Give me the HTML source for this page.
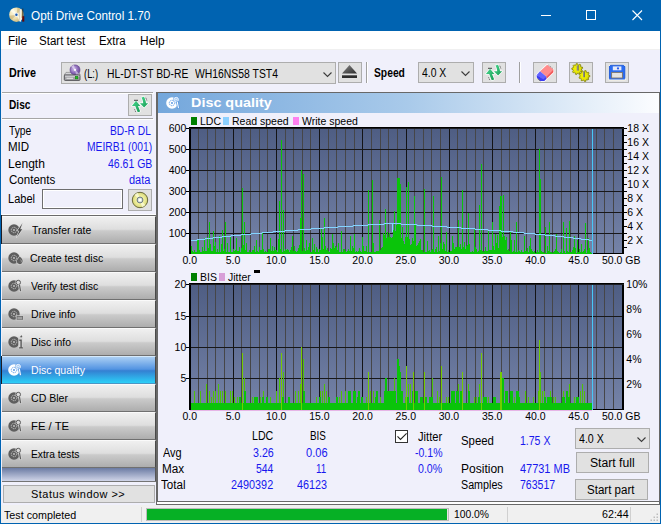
<!DOCTYPE html>
<html><head><meta charset="utf-8"><title>Opti Drive Control 1.70</title>
<style>
*{box-sizing:border-box;margin:0;padding:0}
html,body{width:661px;height:524px;overflow:hidden;background:#f0f0fb}
body{position:relative;font-family:"Liberation Sans",Arial,sans-serif;font-size:12px;color:#000;line-height:16px}
.a{position:absolute;white-space:nowrap}
.btn{position:absolute;background:#e1e1e1;border:1px solid #adadad}
.nav{position:absolute;left:2px;width:154px;height:28px;border-top:1px solid #fafafa;border-bottom:1px solid #707070;border-right:1px solid #4a4a4a;
 background:linear-gradient(#f0f0f0 0%,#dedede 47%,#cbcbcb 53%,#adadad 100%)}
.nav svg{position:absolute;left:5.4px;top:5px}
.nav.sel{background:linear-gradient(#abcff4 0%,#5394e2 47%,#3480d2 53%,#2cd0f8 100%);border-top-color:#d6eafb;border-bottom-color:#4a96c4}
.t{position:absolute;white-space:nowrap;line-height:16px;transform-origin:0 0}
</style></head><body>
<svg width="0" height="0" style="position:absolute"><defs>
 <radialGradient id="dg" cx="0.35" cy="0.35" r="0.8"><stop offset="0" stop-color="#fffbe2"/><stop offset="0.55" stop-color="#ecdca8"/><stop offset="1" stop-color="#b8a468"/></radialGradient>
 <linearGradient id="gg" x1="0" y1="0" x2="1" y2="1"><stop offset="0" stop-color="#4ad890"/><stop offset="1" stop-color="#169a52"/></linearGradient>
 <linearGradient id="ej" x1="0" y1="0" x2="1" y2="1"><stop offset="0" stop-color="#8a8a8a"/><stop offset="1" stop-color="#2a2a2a"/></linearGradient>
 <radialGradient id="pg" cx="0.4" cy="0.4" r="0.7"><stop offset="0" stop-color="#d0c0ec"/><stop offset="0.55" stop-color="#8c6ab8"/><stop offset="1" stop-color="#5c3e8c"/></radialGradient>
 <radialGradient id="yg" cx="0.4" cy="0.45" r="0.65"><stop offset="0" stop-color="#f6f600"/><stop offset="0.6" stop-color="#e2e208"/><stop offset="1" stop-color="#a4a400"/></radialGradient>
 <radialGradient id="cdg" cx="0.5" cy="0.5" r="0.5"><stop offset="0" stop-color="#f6f6c0"/><stop offset="0.6" stop-color="#ecec98"/><stop offset="1" stop-color="#d6d678"/></radialGradient>
 <g id="refresh">
  <path d="M5 4.800L0.900 9.900H4.200L6.700 16.300L9.200 15.400L7 9.900H9.400z" fill="url(#gg)" stroke="#fff" stroke-width="1.300" stroke-linejoin="round" paint-order="stroke"/>
  <path d="M10.400 1.500L13 0.800C14 3 14.800 5 15 7.200H17.200L13.100 11.600L8.900 7.200H12.200C12 5 11.400 3 10.400 1.500z" fill="url(#gg)" stroke="#fff" stroke-width="1.300" stroke-linejoin="round" paint-order="stroke"/>
  <path d="M3 4.300h4" stroke="#333" stroke-width="0.900"/><path d="M14.800 1.800l1 2.600M3.600 13.400l1 2.400" stroke="#333" stroke-width="0.800" stroke-dasharray="1 0.800"/>
 </g>
 <g id="ni"><circle cx="7" cy="8" r="5.700" fill="#5e5e5e"/><circle cx="7" cy="8" r="2.700" fill="none" stroke="#c6c6c6" stroke-width="0.900" stroke-dasharray="1.400 0.600"/><circle cx="7" cy="8" r="0.900" fill="#cacaca"/><circle cx="11.300" cy="4.500" r="2.900" fill="#d9d9d9"/><circle cx="11.300" cy="4.500" r="2.200" fill="#d9d9d9" stroke="#5e5e5e" stroke-width="1"/><path d="M12.300 6.500l1.300 7" stroke="#d9d9d9" stroke-width="2.600"/><path d="M12.400 6.600l1.200 6.600" stroke="#5e5e5e" stroke-width="1.200"/></g>
 <g id="ni1"><circle cx="7" cy="8" r="5.700" fill="#5e5e5e"/><circle cx="7" cy="8" r="2.700" fill="none" stroke="#c6c6c6" stroke-width="0.900" stroke-dasharray="1.400 0.600"/><circle cx="7" cy="8" r="0.900" fill="#cacaca"/><path d="M15.300 1.600L10.400 8.700h2L9.600 15.200L15.200 7.300h-2z" fill="#4a4a4a" stroke="#dcdcdc" stroke-width="1.300" paint-order="stroke" stroke-linejoin="round"/></g>
 <g id="ni2"><circle cx="7" cy="8" r="5.700" fill="#5e5e5e"/><circle cx="7" cy="8" r="2.700" fill="none" stroke="#c6c6c6" stroke-width="0.900" stroke-dasharray="1.400 0.600"/><circle cx="7" cy="8" r="0.900" fill="#cacaca"/><path d="M12.600 6.500C15.400 8.600 16.200 10.600 15.400 12.300A2.900 2.900 0 0 1 9.800 11.400C9.800 9.300 11.700 8.700 12.600 6.500z" fill="#5e5e5e" stroke="#d6d6d6" stroke-width="1.200" paint-order="stroke"/><path d="M13.400 9.500c1 1 1.200 2 0.700 2.800" stroke="#c0c0c0" stroke-width="0.700" fill="none"/></g>
 <g id="ni4"><circle cx="7" cy="8" r="5.700" fill="#5e5e5e"/><circle cx="7" cy="8" r="2.700" fill="none" stroke="#c6c6c6" stroke-width="0.900" stroke-dasharray="1.400 0.600"/><circle cx="7" cy="8" r="0.900" fill="#cacaca"/><rect x="8.800" y="9.300" width="7.600" height="5" fill="#d0d0d0"/><rect x="9.600" y="10" width="6.400" height="3.800" fill="#6a6a6a"/><path d="M10.400 11.300h4.800M10.400 12.700h4.800" stroke="#c8c8c8" stroke-width="0.700"/></g>
 <g id="ni5"><circle cx="7" cy="8" r="5.700" fill="#5e5e5e"/><circle cx="7" cy="8" r="2.700" fill="none" stroke="#c6c6c6" stroke-width="0.900" stroke-dasharray="1.400 0.600"/><circle cx="7" cy="8" r="0.900" fill="#cacaca"/><rect x="11.300" y="2.500" width="4.200" height="12.600" fill="#d6d6d6"/><path d="M13.600 3.200l1.300-1.500" stroke="#5a5a5a" stroke-width="1.300"/><path d="M12.300 6.300h1.800v7.400M11.900 13.900h4" stroke="#5a5a5a" stroke-width="1.400" fill="none"/></g>
 <g id="niw"><circle cx="7" cy="8" r="5.800" fill="#fff"/><circle cx="7" cy="8" r="2.700" fill="none" stroke="#5a98e4" stroke-width="0.900" stroke-dasharray="1.400 0.600"/><circle cx="7" cy="8" r="0.900" fill="#4a8ee0"/><circle cx="11.200" cy="4.600" r="3" fill="#5c9ae4"/><circle cx="11.200" cy="4.600" r="2.300" fill="#a8ccf4" stroke="#fff" stroke-width="0.800"/><path d="M10 4.800l0.800-1 0.800 1 0.800-1" stroke="#fff" stroke-width="0.600" fill="none"/><path d="M12.200 6.600l1.300 6.800" stroke="#4a90e0" stroke-width="2.400"/><path d="M12.300 6.800l1.200 6.400" stroke="#fff" stroke-width="1.100"/></g>
 <g id="dd"><path d="M0.500 0.500l4 4 4-4" fill="none" stroke="#3c3c3c" stroke-width="1.100"/></g>
</defs></svg>
<!-- window frame -->
<div class="a" style="left:0;top:0;width:661px;height:524px;background:#0063b1"></div>
<div class="a" style="left:1px;top:31px;width:659px;height:492px;background:#f0f0fb"></div>
<!-- title icon -->
<svg class="a" style="left:8px;top:6px" width="18" height="18" viewBox="0 0 18 18">
 <circle cx="8.400" cy="8.700" r="7.200" fill="url(#dg)"/>
 <path d="M8.400 8.700L2.200 5A7.200 7.200 0 0 1 5.200 2.200zM8.400 8.700L14.600 12.400A7.200 7.200 0 0 1 11.600 15.200z" fill="#fffdf0" opacity="0.750"/>
 <path d="M8.400 8.700L1.300 9.800A7.200 7.200 0 0 0 3.400 13.900zM8.400 8.700L9.500 1.600A7.200 7.200 0 0 1 13.400 3.500z" fill="#b8a060" opacity="0.450"/>
 <circle cx="8.400" cy="8.700" r="2.100" fill="#f2f2f6"/><circle cx="8.400" cy="8.700" r="1.200" fill="#1c5cb4"/>
 <path d="M14.800 2.500v8" stroke="#3a3020" stroke-width="0.900"/><rect x="14.200" y="10.200" width="2.100" height="5.400" fill="#640808"/>
 <path d="M12.700 3.200L12.300 15.600" stroke="#f4f2ec" stroke-width="1.600"/><path d="M11.700 3.600L11.400 14.600" stroke="#d4ccb8" stroke-width="0.700"/>
</svg>
<svg class="a" style="left:536px;top:5px" width="115" height="22" viewBox="0 0 115 22" fill="none" stroke="#fff" stroke-width="1">
 <path d="M5 10.500h10"/><rect x="50.500" y="5.500" width="9" height="9"/><path d="M96.500 5.500l9.500 9.500M106 5.500l-9.500 9.500" stroke-width="1.100"/>
</svg>
<!-- menu -->
<div class="a" style="left:1px;top:31px;width:659px;height:18px;background:#fff"></div>
<div class="a" style="left:1px;top:49px;width:659px;height:1px;background:#f0f0f0"></div>
<!-- toolbar -->
<div class="btn" style="left:61px;top:62px;width:275px;height:22px"></div>
<svg class="a" style="left:322.500px;top:71.500px" width="10" height="6"><use href="#dd"/></svg>
<svg class="a" style="left:63px;top:64px" width="20" height="18" viewBox="0 0 20 18">
 <path d="M3 8.400h13l1.200 2.600h-16z" fill="#d4d4d8" stroke="#777" stroke-width="0.600"/>
 <circle cx="12" cy="5.900" r="5" fill="url(#pg)" stroke="#5c4088" stroke-width="0.600"/><path d="M12 5.900L8 2.500A5 5 0 0 1 11 1z" fill="#e4d8f4" opacity="0.700"/><path d="M12 5.900L16 9.300A5 5 0 0 1 13 10.800z" fill="#e4d8f4" opacity="0.600"/><circle cx="12" cy="5.900" r="1.100" fill="#fff"/>
 <rect x="1.300" y="11" width="15.700" height="5.400" rx="0.800" fill="#a4a4a8" stroke="#4c4c50" stroke-width="0.900"/><rect x="2" y="11.600" width="14.300" height="1.400" fill="#c8c8cc"/>
 <rect x="3.500" y="13.800" width="6.500" height="1" fill="#e8e8e8"/><rect x="12.300" y="12.300" width="2.600" height="2.600" fill="#1ec81e" stroke="#0a700a" stroke-width="0.500"/>
</svg>
<div class="btn" style="left:338px;top:62px;width:24px;height:21px"></div>
<svg class="a" style="left:341px;top:64px" width="18" height="16" viewBox="0 0 18 16"><path d="M8.500 0.900L16 9.600H1z" fill="url(#ej)"/><rect x="1" y="11.200" width="15" height="2.800" fill="#2e2e2e"/><rect x="1" y="11.200" width="15" height="0.800" fill="#6a6a6a"/></svg>
<div class="a" style="left:366px;top:62px;width:1px;height:21px;background:#a0a0a0"></div><div class="a" style="left:367px;top:62px;width:1px;height:21px;background:#fff"></div>
<div class="btn" style="left:418px;top:62px;width:56px;height:21px"></div>
<svg class="a" style="left:460.500px;top:70.500px" width="10" height="6"><use href="#dd"/></svg>
<div class="btn" style="left:482px;top:62px;width:24px;height:21px"></div>
<svg class="a" style="left:485px;top:63.500px" width="18" height="18" viewBox="0 0 18 18"><use href="#refresh"/></svg>
<div class="a" style="left:519px;top:62px;width:1px;height:21px;background:#a0a0a0"></div><div class="a" style="left:520px;top:62px;width:1px;height:21px;background:#fff"></div>
<div class="btn" style="left:533px;top:62px;width:24px;height:21px"></div>
<svg class="a" style="left:533px;top:62px" width="24" height="21" viewBox="0 0 24 21">
 <path d="M7 9.200L14.200 2.800L20.400 7.300V10.300L13.400 17L11.300 19H7.300L3.700 15.500V13z" fill="#fff" stroke="#fff" stroke-width="1.400" stroke-linejoin="round"/>
 <path d="M7 9.200L14.200 2.800L20.400 7.300L13.200 14.500z" fill="#ff8c8c"/><path d="M13.200 14.500L20.400 7.300V10.300L13.400 17z" fill="#f25a5a"/>
 <path d="M3.700 13L7 9.200L13.200 14.500L10.500 18z" fill="#6464ff"/><path d="M3.700 13L10.500 18L13.400 17L13.200 14.500L10.300 17.200z M3.700 13V15.500L7.300 19H11.300L13.400 17L10.500 18z" fill="#3c3cf0"/>
 <path d="M15.500 3.200l4.500 3.400" stroke="#555" stroke-width="0.700" stroke-dasharray="1.200 0.800"/><path d="M4.300 16.500l3 2.700" stroke="#555" stroke-width="0.700"/>
</svg>
<div class="btn" style="left:569px;top:62px;width:24px;height:21px"></div>
<svg class="a" style="left:569px;top:62px" width="24" height="21" viewBox="0 0 24 21">
 <path d="M12.5 8.0L13.5 8.8L13.0 10.0L11.7 9.7L11.0 10.5L11.3 11.7L10.0 12.3L9.2 11.3L8.2 11.4L7.6 12.6L6.3 12.2L6.3 10.9L5.5 10.3L4.2 10.8L3.5 9.7L4.3 8.7L4.0 7.7L2.8 7.3L2.9 6.0L4.2 5.8L4.6 4.9L3.9 3.8L4.9 2.8L6.0 3.5L6.9 3.0L7.1 1.7L8.4 1.6L8.9 2.8L9.9 3.1L10.8 2.2L11.9 3.0L11.5 4.2L12.1 5.0L13.4 5.0L13.7 6.3L12.6 6.9z" fill="url(#yg)" stroke="#7a7a00" stroke-width="0.700"/>
 <rect x="7.700" y="3.400" width="1.700" height="5.200" fill="#90908c"/><rect x="8.900" y="3.400" width="0.600" height="5.200" fill="#5c5c50"/>
 <path d="M19.2 16.1L19.9 17.1L19.0 18.1L17.9 17.5L17.0 18.0L16.9 19.3L15.5 19.5L15.1 18.3L14.0 18.1L13.1 19.0L12.0 18.3L12.4 17.1L11.7 16.2L10.4 16.4L10.0 15.1L11.1 14.4L11.1 13.4L10.1 12.6L10.6 11.4L11.9 11.6L12.6 10.8L12.2 9.5L13.4 8.9L14.3 9.9L15.3 9.7L15.8 8.5L17.2 8.8L17.2 10.1L18.1 10.6L19.3 10.1L20.1 11.1L19.3 12.2L19.6 13.2L20.9 13.5L20.8 14.8L19.6 15.1z" fill="url(#yg)" stroke="#7a7a00" stroke-width="0.700"/>
 <rect x="14" y="9.800" width="1.700" height="5.400" fill="#90908c"/><rect x="15.200" y="9.800" width="0.600" height="5.400" fill="#5c5c50"/>
</svg>
<div class="btn" style="left:605px;top:62px;width:24px;height:21px"></div>
<svg class="a" style="left:605px;top:62px" width="24" height="21" viewBox="0 0 24 21">
 <path d="M5.200 2.800h13.800l1.400 1.600v13.600h-16.700v-13.600z" fill="#2a6cf2" stroke="#fdf8e8" stroke-width="1"/>
 <path d="M4.400 16.500v-12l1.300-1.200h12.800l1.400 1.500v11.700" fill="none" stroke="#1c54d0" stroke-width="0.800"/>
 <rect x="7.800" y="4.400" width="8.600" height="3.900" fill="#e6ebf8"/><circle cx="13" cy="6.400" r="1.100" fill="#2a5cf0"/>
 <rect x="6.600" y="10.400" width="10.800" height="5.600" fill="#e2e2e2" stroke="#7c7468" stroke-width="0.900"/>
</svg>
<!-- left disc panel -->
<div class="a" style="left:2px;top:92px;width:151px;height:1px;background:#a6a6a6"></div>
<div class="a" style="left:2px;top:118px;width:151px;height:1px;background:#a6a6a6"></div>
<div class="a" style="left:2px;top:119px;width:152px;height:1px;background:#fff"></div><div class="a" style="left:2px;top:93px;width:152px;height:1px;background:#fff"></div>
<div class="btn" style="left:128px;top:94px;width:24px;height:22px"></div>
<svg class="a" style="left:131px;top:96px" width="18" height="18" viewBox="0 0 18 18"><use href="#refresh"/></svg>
<div class="a" style="left:42px;top:189px;width:81px;height:20px;background:#f0f0fb;border:1px solid #6e6e6e;box-shadow:inset 0 0 0 1px #fff"></div>
<div class="btn" style="left:128px;top:189px;width:24px;height:22px"></div>
<svg class="a" style="left:131px;top:191px" width="18" height="18" viewBox="0 0 18 18">
 <circle cx="9" cy="9" r="7.700" fill="url(#cdg)" stroke="#5c5c30" stroke-width="0.900"/>
 <path d="M9 9L3.500 4A7.500 7.500 0 0 1 7 1.800zM9 9L14.500 14A7.500 7.500 0 0 1 11 16.200z" fill="#fbfbd8" opacity="0.800"/>
 <circle cx="9" cy="9" r="2.900" fill="#dfe6d8" stroke="#5a6a78" stroke-width="0.900"/><circle cx="9" cy="9" r="1.300" fill="#fff"/>
</svg>
<!-- nav -->
<div class="a" style="left:2px;top:214px;width:154px;height:1px;background:#fff"></div><div class="a" style="left:2px;top:215px;width:154px;height:1px;background:#6a6a6a"></div>
<div class="a" style="left:1px;top:215px;width:1px;height:29px;background:#1c1c24"></div><div class="a" style="left:1px;top:356px;width:1px;height:28px;background:#1c1c24"></div>
<div class="nav" style="top:216px"><svg width="18" height="18"><use href="#ni1"/></svg></div>
<div class="nav" style="top:244px"><svg width="18" height="18"><use href="#ni2"/></svg></div>
<div class="nav" style="top:272px"><svg width="18" height="18"><use href="#ni"/></svg></div>
<div class="nav" style="top:300px"><svg width="18" height="18"><use href="#ni4"/></svg></div>
<div class="nav" style="top:328px"><svg width="18" height="18"><use href="#ni5"/></svg></div>
<div class="nav sel" style="top:356px"><svg width="18" height="18"><use href="#niw"/></svg></div>
<div class="nav" style="top:384px"><svg width="18" height="18"><use href="#ni"/></svg></div>
<div class="nav" style="top:412px"><svg width="18" height="18"><use href="#ni"/></svg></div>
<div class="nav" style="top:440px"><svg width="18" height="18"><use href="#ni"/></svg></div>
<div class="a" style="left:2px;top:468px;width:154px;height:13px;background:linear-gradient(#6b7ba3,#d0d5e8);border-right:1px solid #555"></div><div class="a" style="left:2px;top:481px;width:154px;height:1px;background:#747474"></div>
<div class="btn" style="left:3px;top:485px;width:152px;height:18px"></div>
<!-- chart panel -->
<div class="a" style="left:156px;top:92px;width:504px;height:413px;border:1px solid #686868;background:#fff"></div>
<div class="a" style="left:157px;top:92px;width:502px;height:410px;border:1px solid #686868;border-right:none;background:#f0f0fb"></div>
<div class="a" style="left:158px;top:93px;width:501px;height:20px;background:linear-gradient(90deg,#74a7dc 0%,#a9caea 50%,#fcfdff 100%)"></div>
<svg class="a" style="left:165px;top:95.300px" width="18" height="18"><use href="#niw"/></svg>
<svg width="661" height="524" viewBox="0 0 661 524" style="position:absolute;left:0;top:0" font-family="Liberation Sans, Arial, sans-serif" font-size="11px" fill="#000">
<defs><linearGradient id="g1" x1="0" y1="0" x2="0" y2="1"><stop offset="0" stop-color="#4e5d83"/><stop offset="1" stop-color="#7583a8"/></linearGradient></defs>
<rect x="189" y="127" width="435" height="127" fill="url(#g1)"/>
<rect x="198" y="128" width="1" height="126" fill="#464648"/>
<rect x="207" y="128" width="1" height="126" fill="#464648"/>
<rect x="215" y="128" width="1" height="126" fill="#464648"/>
<rect x="224" y="128" width="1" height="126" fill="#464648"/>
<rect x="233" y="128" width="1" height="126" fill="#141416"/>
<rect x="241" y="128" width="1" height="126" fill="#464648"/>
<rect x="250" y="128" width="1" height="126" fill="#464648"/>
<rect x="259" y="128" width="1" height="126" fill="#464648"/>
<rect x="267" y="128" width="1" height="126" fill="#464648"/>
<rect x="276" y="128" width="1" height="126" fill="#141416"/>
<rect x="285" y="128" width="1" height="126" fill="#464648"/>
<rect x="293" y="128" width="1" height="126" fill="#464648"/>
<rect x="302" y="128" width="1" height="126" fill="#464648"/>
<rect x="310" y="128" width="1" height="126" fill="#464648"/>
<rect x="319" y="128" width="1" height="126" fill="#141416"/>
<rect x="328" y="128" width="1" height="126" fill="#464648"/>
<rect x="336" y="128" width="1" height="126" fill="#464648"/>
<rect x="345" y="128" width="1" height="126" fill="#464648"/>
<rect x="354" y="128" width="1" height="126" fill="#464648"/>
<rect x="362" y="128" width="1" height="126" fill="#141416"/>
<rect x="371" y="128" width="1" height="126" fill="#464648"/>
<rect x="380" y="128" width="1" height="126" fill="#464648"/>
<rect x="388" y="128" width="1" height="126" fill="#464648"/>
<rect x="397" y="128" width="1" height="126" fill="#464648"/>
<rect x="406" y="128" width="1" height="126" fill="#141416"/>
<rect x="414" y="128" width="1" height="126" fill="#464648"/>
<rect x="423" y="128" width="1" height="126" fill="#464648"/>
<rect x="431" y="128" width="1" height="126" fill="#464648"/>
<rect x="440" y="128" width="1" height="126" fill="#464648"/>
<rect x="449" y="128" width="1" height="126" fill="#141416"/>
<rect x="457" y="128" width="1" height="126" fill="#464648"/>
<rect x="466" y="128" width="1" height="126" fill="#464648"/>
<rect x="475" y="128" width="1" height="126" fill="#464648"/>
<rect x="483" y="128" width="1" height="126" fill="#464648"/>
<rect x="492" y="128" width="1" height="126" fill="#141416"/>
<rect x="501" y="128" width="1" height="126" fill="#464648"/>
<rect x="509" y="128" width="1" height="126" fill="#464648"/>
<rect x="518" y="128" width="1" height="126" fill="#464648"/>
<rect x="526" y="128" width="1" height="126" fill="#464648"/>
<rect x="535" y="128" width="1" height="126" fill="#141416"/>
<rect x="544" y="128" width="1" height="126" fill="#464648"/>
<rect x="552" y="128" width="1" height="126" fill="#464648"/>
<rect x="561" y="128" width="1" height="126" fill="#464648"/>
<rect x="570" y="128" width="1" height="126" fill="#464648"/>
<rect x="578" y="128" width="1" height="126" fill="#141416"/>
<rect x="587" y="128" width="1" height="126" fill="#464648"/>
<rect x="596" y="128" width="1" height="126" fill="#464648"/>
<rect x="604" y="128" width="1" height="126" fill="#464648"/>
<rect x="613" y="128" width="1" height="126" fill="#464648"/>
<rect x="189" y="149" width="435" height="1" fill="#18181a"/>
<rect x="189" y="170" width="435" height="1" fill="#18181a"/>
<rect x="189" y="191" width="435" height="1" fill="#18181a"/>
<rect x="189" y="212" width="435" height="1" fill="#18181a"/>
<rect x="189" y="233" width="435" height="1" fill="#18181a"/>
<rect x="189" y="253" width="435" height="1" fill="#000"/>
<path d="M190 254v-3h1v3zM191 254v-8h1v8zM192 254v-3h1v3zM193 254v-2h1v2zM194 254v-4h1v4zM195 254v-2h1v2zM196 254v-2h1v2zM197 254v-14h1v14zM198 254v-14h1v14zM199 254v-4h1v4zM200 254v-2h1v2zM201 254v-2h1v2zM202 254v-7h1v7zM203 254v-3h1v3zM204 254v-16h1v16zM205 254v-3h1v3zM206 254v-3h1v3zM207 254v-17h1v17zM208 254v-6h1v6zM209 254v-32h1v32zM210 254v-10h1v10zM211 254v-3h1v3zM212 254v-3h1v3zM213 254v-23h1v23zM214 254v-8h1v8zM215 254v-12h1v12zM216 254v-2h1v2zM217 254v-5h1v5zM218 254v-2h1v2zM219 254v-18h1v18zM220 254v-2h1v2zM221 254v-10h1v10zM222 254v-24h1v24zM223 254v-3h1v3zM224 254v-5h1v5zM225 254v-32h1v32zM226 254v-2h1v2zM227 254v-11h1v11zM228 254v-2h1v2zM229 254v-2h1v2zM230 254v-18h1v18zM231 254v-2h1v2zM232 254v-2h1v2zM233 254v-5h1v5zM234 254v-3h1v3zM235 254v-4h1v4zM236 254v-16h1v16zM237 254v-3h1v3zM238 254v-3h1v3zM239 254v-7h1v7zM240 254v-2h1v2zM241 254v-6h1v6zM242 254v-66h1v66zM243 254v-9h1v9zM244 254v-32h1v32zM245 254v-4h1v4zM246 254v-11h1v11zM247 254v-2h1v2zM248 254v-2h1v2zM249 254v-4h1v4zM250 254v-2h1v2zM251 254v-2h1v2zM252 254v-4h1v4zM253 254v-4h1v4zM254 254v-8h1v8zM255 254v-2h1v2zM256 254v-14h1v14zM257 254v-3h1v3zM258 254v-2h1v2zM259 254v-7h1v7zM260 254v-4h1v4zM261 254v-4h1v4zM262 254v-21h1v21zM263 254v-5h1v5zM264 254v-2h1v2zM265 254v-3h1v3zM266 254v-2h1v2zM267 254v-2h1v2zM268 254v-5h1v5zM269 254v-5h1v5zM270 254v-16h1v16zM271 254v-3h1v3zM272 254v-8h1v8zM273 254v-3h1v3zM274 254v-7h1v7zM275 254v-4h1v4zM276 254v-4h1v4zM277 254v-2h1v2zM278 254v-15h1v15zM279 254v-53h1v53zM280 254v-5h1v5zM281 254v-114h1v114zM282 254v-2h1v2zM283 254v-44h1v44zM284 254v-3h1v3zM285 254v-5h1v5zM286 254v-4h1v4zM287 254v-5h1v5zM288 254v-4h1v4zM289 254v-2h1v2zM290 254v-4h1v4zM291 254v-7h1v7zM292 254v-18h1v18zM293 254v-3h1v3zM294 254v-8h1v8zM295 254v-3h1v3zM296 254v-2h1v2zM297 254v-3h1v3zM298 254v-6h1v6zM299 254v-9h1v9zM300 254v-36h1v36zM301 254v-84h1v84zM302 254v-3h1v3zM303 254v-80h1v80zM304 254v-6h1v6zM305 254v-3h1v3zM306 254v-14h1v14zM307 254v-4h1v4zM308 254v-7h1v7zM309 254v-11h1v11zM310 254v-2h1v2zM311 254v-2h1v2zM312 254v-16h1v16zM313 254v-4h1v4zM314 254v-10h1v10zM315 254v-2h1v2zM316 254v-7h1v7zM317 254v-5h1v5zM318 254v-2h1v2zM319 254v-5h1v5zM320 254v-4h1v4zM321 254v-25h1v25zM322 254v-17h1v17zM323 254v-5h1v5zM324 254v-36h1v36zM325 254v-8h1v8zM326 254v-4h1v4zM327 254v-6h1v6zM328 254v-3h1v3zM329 254v-2h1v2zM330 254v-6h1v6zM331 254v-5h1v5zM332 254v-20h1v20zM333 254v-11h1v11zM334 254v-6h1v6zM335 254v-8h1v8zM336 254v-7h1v7zM337 254v-4h1v4zM338 254v-11h1v11zM339 254v-2h1v2zM340 254v-2h1v2zM341 254v-23h1v23zM342 254v-2h1v2zM343 254v-5h1v5zM344 254v-5h1v5zM345 254v-3h1v3zM346 254v-2h1v2zM347 254v-3h1v3zM348 254v-5h1v5zM349 254v-3h1v3zM350 254v-18h1v18zM351 254v-3h1v3zM352 254v-8h1v8zM353 254v-6h1v6zM354 254v-20h1v20zM355 254v-2h1v2zM356 254v-3h1v3zM357 254v-2h1v2zM358 254v-3h1v3zM359 254v-6h1v6zM360 254v-3h1v3zM361 254v-2h1v2zM362 254v-17h1v17zM363 254v-8h1v8zM364 254v-3h1v3zM365 254v-3h1v3zM366 254v-8h1v8zM367 254v-2h1v2zM368 254v-64h1v64zM369 254v-2h1v2zM370 254v-2h1v2zM371 254v-2h1v2zM372 254v-74h1v74zM373 254v-11h1v11zM374 254v-2h1v2zM375 254v-2h1v2zM376 254v-3h1v3zM377 254v-3h1v3zM378 254v-3h1v3zM379 254v-34h1v34zM380 254v-4h1v4zM381 254v-6h1v6zM382 254v-7h1v7zM383 254v-21h1v21zM384 254v-19h1v19zM385 254v-45h1v45zM386 254v-16h1v16zM387 254v-22h1v22zM388 254v-17h1v17zM389 254v-21h1v21zM390 254v-17h1v17zM391 254v-16h1v16zM392 254v-17h1v17zM393 254v-24h1v24zM394 254v-43h1v43zM395 254v-23h1v23zM396 254v-29h1v29zM397 254v-76h1v76zM398 254v-76h1v76zM399 254v-76h1v76zM400 254v-70h1v70zM401 254v-16h1v16zM402 254v-27h1v27zM403 254v-13h1v13zM404 254v-10h1v10zM405 254v-17h1v17zM406 254v-67h1v67zM407 254v-17h1v17zM408 254v-72h1v72zM409 254v-15h1v15zM410 254v-9h1v9zM411 254v-10h1v10zM412 254v-16h1v16zM413 254v-13h1v13zM414 254v-58h1v58zM415 254v-30h1v30zM416 254v-8h1v8zM417 254v-9h1v9zM418 254v-11h1v11zM419 254v-13h1v13zM420 254v-15h1v15zM421 254v-4h1v4zM422 254v-4h1v4zM423 254v-2h1v2zM424 254v-65h1v65zM425 254v-2h1v2zM426 254v-2h1v2zM427 254v-13h1v13zM428 254v-3h1v3zM429 254v-4h1v4zM430 254v-2h1v2zM431 254v-4h1v4zM432 254v-5h1v5zM433 254v-58h1v58zM434 254v-2h1v2zM435 254v-5h1v5zM436 254v-7h1v7zM437 254v-2h1v2zM438 254v-18h1v18zM439 254v-3h1v3zM440 254v-11h1v11zM441 254v-77h1v77zM442 254v-5h1v5zM443 254v-12h1v12zM444 254v-10h1v10zM445 254v-3h1v3zM446 254v-22h1v22zM447 254v-2h1v2zM448 254v-4h1v4zM449 254v-2h1v2zM450 254v-3h1v3zM451 254v-3h1v3zM452 254v-18h1v18zM453 254v-11h1v11zM454 254v-5h1v5zM455 254v-7h1v7zM456 254v-7h1v7zM457 254v-7h1v7zM458 254v-34h1v34zM459 254v-7h1v7zM460 254v-10h1v10zM461 254v-5h1v5zM462 254v-64h1v64zM463 254v-7h1v7zM464 254v-12h1v12zM465 254v-5h1v5zM466 254v-8h1v8zM467 254v-9h1v9zM468 254v-41h1v41zM469 254v-10h1v10zM470 254v-2h1v2zM471 254v-2h1v2zM472 254v-3h1v3zM473 254v-2h1v2zM474 254v-26h1v26zM475 254v-7h1v7zM476 254v-5h1v5zM477 254v-2h1v2zM478 254v-3h1v3zM479 254v-49h1v49zM480 254v-4h1v4zM481 254v-90h1v90zM482 254v-3h1v3zM483 254v-2h1v2zM484 254v-3h1v3zM485 254v-7h1v7zM486 254v-3h1v3zM487 254v-3h1v3zM488 254v-24h1v24zM489 254v-4h1v4zM490 254v-4h1v4zM491 254v-4h1v4zM492 254v-32h1v32zM493 254v-8h1v8zM494 254v-4h1v4zM495 254v-20h1v20zM496 254v-11h1v11zM497 254v-19h1v19zM498 254v-6h1v6zM499 254v-48h1v48zM500 254v-58h1v58zM501 254v-58h1v58zM502 254v-17h1v17zM503 254v-59h1v59zM504 254v-18h1v18zM505 254v-14h1v14zM506 254v-17h1v17zM507 254v-4h1v4zM508 254v-5h1v5zM509 254v-3h1v3zM510 254v-22h1v22zM511 254v-14h1v14zM512 254v-2h1v2zM513 254v-3h1v3zM514 254v-14h1v14zM515 254v-2h1v2zM516 254v-32h1v32zM517 254v-2h1v2zM518 254v-4h1v4zM519 254v-3h1v3zM520 254v-2h1v2zM521 254v-4h1v4zM522 254v-2h1v2zM523 254v-2h1v2zM524 254v-18h1v18zM525 254v-3h1v3zM526 254v-3h1v3zM527 254v-6h1v6zM528 254v-2h1v2zM529 254v-8h1v8zM530 254v-16h1v16zM531 254v-5h1v5zM532 254v-3h1v3zM533 254v-2h1v2zM534 254v-3h1v3zM535 254v-1h1v1zM536 254v-2h1v2zM537 254v-4h1v4zM538 254v-2h1v2zM539 254v-105h1v105zM540 254v-75h1v75zM541 254v-3h1v3zM542 254v-2h1v2zM543 254v-2h1v2zM544 254v-1h1v1zM545 254v-27h1v27zM546 254v-1h1v1zM547 254v-8h1v8zM548 254v-3h1v3zM549 254v-32h1v32zM550 254v-2h1v2zM551 254v-2h1v2zM552 254v-1h1v1zM553 254v-2h1v2zM554 254v-3h1v3zM555 254v-5h1v5zM556 254v-20h1v20zM557 254v-3h1v3zM558 254v-2h1v2zM559 254v-1h1v1zM560 254v-2h1v2zM561 254v-5h1v5zM562 254v-1h1v1zM563 254v-32h1v32zM564 254v-3h1v3zM565 254v-1h1v1zM566 254v-26h1v26zM567 254v-3h1v3zM568 254v-2h1v2zM569 254v-33h1v33zM570 254v-2h1v2zM571 254v-2h1v2zM572 254v-4h1v4zM573 254v-7h1v7zM574 254v-18h1v18zM575 254v-6h1v6zM576 254v-1h1v1zM577 254v-14h1v14zM578 254v-2h1v2zM579 254v-5h1v5zM580 254v-2h1v2zM581 254v-10h1v10zM582 254v-2h1v2zM583 254v-3h1v3zM584 254v-5h1v5zM585 254v-31h1v31zM586 254v-1h1v1zM587 254v-4h1v4zM588 254v-16h1v16zM589 254v-6h1v6zM590 254v-2h1v2zM591 254v-1h1v1z" fill="#0ac40a" shape-rendering="crispEdges"/>
<polyline points="190,240.5 197,240.5 197,239.5 205,239.5 205,238.5 213,238.5 213,237.5 222,237.5 222,236.5 231,236.5 231,235.5 241,235.5 241,234.5 251,234.5 251,233.5 262,233.5 262,232.5 273,232.5 273,231.5 285,231.5 285,230.5 298,230.5 298,229.5 311,229.5 311,228.5 324,228.5 324,227.5 338,227.5 338,226.5 353,226.5 353,225.5 368,225.5 368,224.5 384,224.5 384,223.5 401,223.5 401,224.5 417,224.5 417,225.5 432,225.5 432,226.5 447,226.5 447,227.5 461,227.5 461,228.5 475,228.5 475,229.5 488,229.5 488,230.5 501,230.5 501,231.5 513,231.5 513,232.5 524,232.5 524,233.5 535,233.5 535,234.5 545,234.5 545,235.5 555,235.5 555,236.5 564,236.5 564,237.5 573,237.5 573,238.5 581,238.5 581,239.5 589,239.5 589,240.5 592,240.5" fill="none" stroke="#84d4ff" stroke-width="1"/><path d="M392.5 223v9" stroke="#84d4ff" stroke-width="1" fill="none"/>
<rect x="592" y="128" width="1" height="126" fill="#48c8f6"/>
<rect x="189" y="127" width="2" height="127" fill="#000"/>
<rect x="622" y="127" width="2" height="127" fill="#000"/>
<rect x="189" y="127" width="435" height="1" fill="#000"/>
<rect x="189" y="128" width="435" height="1" fill="#1c1c22"/>
<rect x="189" y="283" width="435" height="127" fill="url(#g1)"/>
<rect x="198" y="284" width="1" height="126" fill="#464648"/>
<rect x="207" y="284" width="1" height="126" fill="#464648"/>
<rect x="215" y="284" width="1" height="126" fill="#464648"/>
<rect x="224" y="284" width="1" height="126" fill="#464648"/>
<rect x="233" y="284" width="1" height="126" fill="#141416"/>
<rect x="241" y="284" width="1" height="126" fill="#464648"/>
<rect x="250" y="284" width="1" height="126" fill="#464648"/>
<rect x="259" y="284" width="1" height="126" fill="#464648"/>
<rect x="267" y="284" width="1" height="126" fill="#464648"/>
<rect x="276" y="284" width="1" height="126" fill="#141416"/>
<rect x="285" y="284" width="1" height="126" fill="#464648"/>
<rect x="293" y="284" width="1" height="126" fill="#464648"/>
<rect x="302" y="284" width="1" height="126" fill="#464648"/>
<rect x="310" y="284" width="1" height="126" fill="#464648"/>
<rect x="319" y="284" width="1" height="126" fill="#141416"/>
<rect x="328" y="284" width="1" height="126" fill="#464648"/>
<rect x="336" y="284" width="1" height="126" fill="#464648"/>
<rect x="345" y="284" width="1" height="126" fill="#464648"/>
<rect x="354" y="284" width="1" height="126" fill="#464648"/>
<rect x="362" y="284" width="1" height="126" fill="#141416"/>
<rect x="371" y="284" width="1" height="126" fill="#464648"/>
<rect x="380" y="284" width="1" height="126" fill="#464648"/>
<rect x="388" y="284" width="1" height="126" fill="#464648"/>
<rect x="397" y="284" width="1" height="126" fill="#464648"/>
<rect x="406" y="284" width="1" height="126" fill="#141416"/>
<rect x="414" y="284" width="1" height="126" fill="#464648"/>
<rect x="423" y="284" width="1" height="126" fill="#464648"/>
<rect x="431" y="284" width="1" height="126" fill="#464648"/>
<rect x="440" y="284" width="1" height="126" fill="#464648"/>
<rect x="449" y="284" width="1" height="126" fill="#141416"/>
<rect x="457" y="284" width="1" height="126" fill="#464648"/>
<rect x="466" y="284" width="1" height="126" fill="#464648"/>
<rect x="475" y="284" width="1" height="126" fill="#464648"/>
<rect x="483" y="284" width="1" height="126" fill="#464648"/>
<rect x="492" y="284" width="1" height="126" fill="#141416"/>
<rect x="501" y="284" width="1" height="126" fill="#464648"/>
<rect x="509" y="284" width="1" height="126" fill="#464648"/>
<rect x="518" y="284" width="1" height="126" fill="#464648"/>
<rect x="526" y="284" width="1" height="126" fill="#464648"/>
<rect x="535" y="284" width="1" height="126" fill="#141416"/>
<rect x="544" y="284" width="1" height="126" fill="#464648"/>
<rect x="552" y="284" width="1" height="126" fill="#464648"/>
<rect x="561" y="284" width="1" height="126" fill="#464648"/>
<rect x="570" y="284" width="1" height="126" fill="#464648"/>
<rect x="578" y="284" width="1" height="126" fill="#141416"/>
<rect x="587" y="284" width="1" height="126" fill="#464648"/>
<rect x="596" y="284" width="1" height="126" fill="#464648"/>
<rect x="604" y="284" width="1" height="126" fill="#464648"/>
<rect x="613" y="284" width="1" height="126" fill="#464648"/>
<rect x="189" y="316" width="435" height="1" fill="#18181a"/>
<rect x="189" y="347" width="435" height="1" fill="#18181a"/>
<rect x="189" y="378" width="435" height="1" fill="#18181a"/>
<rect x="189" y="409" width="435" height="1" fill="#000"/>
<path d="M190 410v-7h1v7zM191 410v-7h1v7zM192 410v-7h1v7zM193 410v-7h1v7zM194 410v-7h1v7zM195 410v-7h1v7zM196 410v-7h1v7zM197 410v-7h1v7zM198 410v-7h1v7zM199 410v-7h1v7zM200 410v-7h1v7zM201 410v-7h1v7zM202 410v-7h1v7zM203 410v-7h1v7zM204 410v-7h1v7zM205 410v-7h1v7zM206 410v-7h1v7zM207 410v-7h1v7zM208 410v-7h1v7zM209 410v-7h1v7zM210 410v-7h1v7zM211 410v-7h1v7zM212 410v-7h1v7zM213 410v-7h1v7zM214 410v-7h1v7zM215 410v-7h1v7zM216 410v-7h1v7zM217 410v-7h1v7zM218 410v-7h1v7zM219 410v-7h1v7zM220 410v-7h1v7zM221 410v-7h1v7zM222 410v-7h1v7zM223 410v-7h1v7zM224 410v-7h1v7zM225 410v-7h1v7zM226 410v-7h1v7zM227 410v-7h1v7zM228 410v-7h1v7zM229 410v-7h1v7zM230 410v-7h1v7zM231 410v-7h1v7zM232 410v-7h1v7zM233 410v-7h1v7zM234 410v-7h1v7zM235 410v-7h1v7zM236 410v-7h1v7zM237 410v-7h1v7zM238 410v-7h1v7zM239 410v-13h1v13zM240 410v-13h1v13zM241 410v-7h1v7zM242 410v-7h1v7zM243 410v-7h1v7zM244 410v-19h1v19zM245 410v-19h1v19zM246 410v-7h1v7zM247 410v-7h1v7zM248 410v-7h1v7zM249 410v-7h1v7zM250 410v-7h1v7zM251 410v-7h1v7zM252 410v-7h1v7zM253 410v-7h1v7zM254 410v-13h1v13zM255 410v-13h1v13zM256 410v-13h1v13zM257 410v-13h1v13zM258 410v-7h1v7zM259 410v-7h1v7zM260 410v-7h1v7zM261 410v-7h1v7zM262 410v-13h1v13zM263 410v-13h1v13zM264 410v-7h1v7zM265 410v-7h1v7zM266 410v-13h1v13zM267 410v-13h1v13zM268 410v-7h1v7zM269 410v-7h1v7zM270 410v-7h1v7zM271 410v-7h1v7zM272 410v-7h1v7zM273 410v-7h1v7zM274 410v-7h1v7zM275 410v-7h1v7zM276 410v-7h1v7zM277 410v-7h1v7zM278 410v-7h1v7zM279 410v-7h1v7zM280 410v-7h1v7zM281 410v-7h1v7zM282 410v-13h1v13zM283 410v-13h1v13zM284 410v-7h1v7zM285 410v-7h1v7zM286 410v-7h1v7zM287 410v-7h1v7zM288 410v-13h1v13zM289 410v-13h1v13zM290 410v-7h1v7zM291 410v-7h1v7zM292 410v-7h1v7zM293 410v-7h1v7zM294 410v-7h1v7zM295 410v-7h1v7zM296 410v-7h1v7zM297 410v-7h1v7zM298 410v-7h1v7zM299 410v-7h1v7zM300 410v-7h1v7zM301 410v-7h1v7zM302 410v-7h1v7zM303 410v-19h1v19zM304 410v-19h1v19zM305 410v-7h1v7zM306 410v-7h1v7zM307 410v-7h1v7zM308 410v-7h1v7zM309 410v-7h1v7zM310 410v-7h1v7zM311 410v-7h1v7zM312 410v-7h1v7zM313 410v-7h1v7zM314 410v-7h1v7zM315 410v-7h1v7zM316 410v-7h1v7zM317 410v-7h1v7zM318 410v-7h1v7zM319 410v-13h1v13zM320 410v-13h1v13zM321 410v-7h1v7zM322 410v-7h1v7zM323 410v-7h1v7zM324 410v-7h1v7zM325 410v-7h1v7zM326 410v-7h1v7zM327 410v-7h1v7zM328 410v-13h1v13zM329 410v-13h1v13zM330 410v-7h1v7zM331 410v-7h1v7zM332 410v-7h1v7zM333 410v-7h1v7zM334 410v-7h1v7zM335 410v-7h1v7zM336 410v-13h1v13zM337 410v-13h1v13zM338 410v-7h1v7zM339 410v-7h1v7zM340 410v-7h1v7zM341 410v-7h1v7zM342 410v-7h1v7zM343 410v-7h1v7zM344 410v-7h1v7zM345 410v-7h1v7zM346 410v-7h1v7zM347 410v-7h1v7zM348 410v-19h1v19zM349 410v-19h1v19zM350 410v-19h1v19zM351 410v-7h1v7zM352 410v-7h1v7zM353 410v-19h1v19zM354 410v-19h1v19zM355 410v-19h1v19zM356 410v-7h1v7zM357 410v-13h1v13zM358 410v-19h1v19zM359 410v-19h1v19zM360 410v-7h1v7zM361 410v-13h1v13zM362 410v-13h1v13zM363 410v-7h1v7zM364 410v-7h1v7zM365 410v-7h1v7zM366 410v-7h1v7zM367 410v-7h1v7zM368 410v-7h1v7zM369 410v-7h1v7zM370 410v-7h1v7zM371 410v-7h1v7zM372 410v-7h1v7zM373 410v-7h1v7zM374 410v-7h1v7zM375 410v-13h1v13zM376 410v-19h1v19zM377 410v-19h1v19zM378 410v-7h1v7zM379 410v-7h1v7zM380 410v-7h1v7zM381 410v-7h1v7zM382 410v-7h1v7zM383 410v-7h1v7zM384 410v-19h1v19zM385 410v-32h1v32zM386 410v-32h1v32zM387 410v-19h1v19zM388 410v-19h1v19zM389 410v-19h1v19zM390 410v-19h1v19zM391 410v-19h1v19zM392 410v-19h1v19zM393 410v-19h1v19zM394 410v-19h1v19zM395 410v-19h1v19zM396 410v-7h1v7zM397 410v-51h1v51zM398 410v-51h1v51zM399 410v-44h1v44zM400 410v-38h1v38zM401 410v-19h1v19zM402 410v-19h1v19zM403 410v-7h1v7zM404 410v-7h1v7zM405 410v-7h1v7zM406 410v-7h1v7zM407 410v-13h1v13zM408 410v-13h1v13zM409 410v-7h1v7zM410 410v-7h1v7zM411 410v-7h1v7zM412 410v-19h1v19zM413 410v-19h1v19zM414 410v-7h1v7zM415 410v-19h1v19zM416 410v-19h1v19zM417 410v-19h1v19zM418 410v-7h1v7zM419 410v-7h1v7zM420 410v-13h1v13zM421 410v-13h1v13zM422 410v-13h1v13zM423 410v-7h1v7zM424 410v-13h1v13zM425 410v-13h1v13zM426 410v-13h1v13zM427 410v-7h1v7zM428 410v-7h1v7zM429 410v-13h1v13zM430 410v-13h1v13zM431 410v-13h1v13zM432 410v-13h1v13zM433 410v-7h1v7zM434 410v-7h1v7zM435 410v-7h1v7zM436 410v-7h1v7zM437 410v-7h1v7zM438 410v-7h1v7zM439 410v-7h1v7zM440 410v-7h1v7zM441 410v-7h1v7zM442 410v-7h1v7zM443 410v-7h1v7zM444 410v-7h1v7zM445 410v-7h1v7zM446 410v-7h1v7zM447 410v-7h1v7zM448 410v-7h1v7zM449 410v-7h1v7zM450 410v-7h1v7zM451 410v-19h1v19zM452 410v-19h1v19zM453 410v-19h1v19zM454 410v-19h1v19zM455 410v-7h1v7zM456 410v-19h1v19zM457 410v-19h1v19zM458 410v-19h1v19zM459 410v-7h1v7zM460 410v-19h1v19zM461 410v-19h1v19zM462 410v-7h1v7zM463 410v-7h1v7zM464 410v-7h1v7zM465 410v-7h1v7zM466 410v-7h1v7zM467 410v-7h1v7zM468 410v-19h1v19zM469 410v-19h1v19zM470 410v-7h1v7zM471 410v-7h1v7zM472 410v-7h1v7zM473 410v-7h1v7zM474 410v-7h1v7zM475 410v-7h1v7zM476 410v-7h1v7zM477 410v-7h1v7zM478 410v-13h1v13zM479 410v-13h1v13zM480 410v-7h1v7zM481 410v-7h1v7zM482 410v-7h1v7zM483 410v-13h1v13zM484 410v-13h1v13zM485 410v-13h1v13zM486 410v-13h1v13zM487 410v-7h1v7zM488 410v-7h1v7zM489 410v-7h1v7zM490 410v-7h1v7zM491 410v-7h1v7zM492 410v-7h1v7zM493 410v-13h1v13zM494 410v-13h1v13zM495 410v-13h1v13zM496 410v-7h1v7zM497 410v-7h1v7zM498 410v-7h1v7zM499 410v-7h1v7zM500 410v-19h1v19zM501 410v-32h1v32zM502 410v-32h1v32zM503 410v-32h1v32zM504 410v-7h1v7zM505 410v-19h1v19zM506 410v-19h1v19zM507 410v-19h1v19zM508 410v-7h1v7zM509 410v-7h1v7zM510 410v-19h1v19zM511 410v-19h1v19zM512 410v-19h1v19zM513 410v-7h1v7zM514 410v-7h1v7zM515 410v-7h1v7zM516 410v-19h1v19zM517 410v-19h1v19zM518 410v-19h1v19zM519 410v-13h1v13zM520 410v-7h1v7zM521 410v-7h1v7zM522 410v-7h1v7zM523 410v-7h1v7zM524 410v-7h1v7zM525 410v-7h1v7zM526 410v-7h1v7zM527 410v-7h1v7zM528 410v-7h1v7zM529 410v-7h1v7zM530 410v-7h1v7zM531 410v-7h1v7zM532 410v-7h1v7zM533 410v-7h1v7zM534 410v-7h1v7zM535 410v-7h1v7zM536 410v-7h1v7zM537 410v-7h1v7zM538 410v-7h1v7zM539 410v-7h1v7zM540 410v-7h1v7zM541 410v-7h1v7zM542 410v-7h1v7zM543 410v-7h1v7zM544 410v-13h1v13zM545 410v-13h1v13zM546 410v-7h1v7zM547 410v-13h1v13zM548 410v-13h1v13zM549 410v-13h1v13zM550 410v-13h1v13zM551 410v-13h1v13zM552 410v-7h1v7zM553 410v-7h1v7zM554 410v-7h1v7zM555 410v-7h1v7zM556 410v-7h1v7zM557 410v-7h1v7zM558 410v-7h1v7zM559 410v-7h1v7zM560 410v-7h1v7zM561 410v-7h1v7zM562 410v-13h1v13zM563 410v-13h1v13zM564 410v-13h1v13zM565 410v-7h1v7zM566 410v-19h1v19zM567 410v-19h1v19zM568 410v-13h1v13zM569 410v-13h1v13zM570 410v-7h1v7zM571 410v-7h1v7zM572 410v-7h1v7zM573 410v-7h1v7zM574 410v-7h1v7zM575 410v-7h1v7zM576 410v-13h1v13zM577 410v-13h1v13zM578 410v-13h1v13zM579 410v-7h1v7zM580 410v-7h1v7zM581 410v-7h1v7zM582 410v-7h1v7zM583 410v-7h1v7zM584 410v-7h1v7zM585 410v-7h1v7zM586 410v-7h1v7zM587 410v-7h1v7zM588 410v-7h1v7zM589 410v-7h1v7zM590 410v-7h1v7zM591 410v-7h1v7z" fill="#0ac40a" shape-rendering="crispEdges"/><path d="M194 403V391h1V403zM200 403V391h1V403zM206 403V384h1V403zM209 403V391h1V403zM211 403V397h1V403zM213 403V391h1V403zM215 403V391h1V403zM218 403V384h1V403zM220 403V391h1V403zM222 403V391h1V403zM225 403V391h1V403zM230 403V391h1V403zM232 403V391h1V403zM234 403V397h1V403zM237 403V397h1V403zM244 391V378h1V391zM252 403V397h1V403zM260 403V397h1V403zM263 397V391h1V397zM270 403V397h1V403zM276 403V391h1V403zM279 403V378h1V403zM283 397V372h1V397zM295 403V391h1V403zM298 403V391h1V403zM300 403V384h1V403zM303 391V359h1V391zM316 403V397h1V403zM320 397V391h1V397zM322 403V391h1V403zM324 403V384h1V403zM326 403V391h1V403zM339 403V397h1V403zM341 403V391h1V403zM345 403V391h1V403zM366 403V397h1V403zM370 403V391h1V403zM373 403V391h1V403zM380 403V397h1V403zM394 391V378h1V391zM405 403V397h1V403zM408 397V384h1V397zM410 403V384h1V403zM432 397V378h1V397zM437 403V391h1V403zM439 403V397h1V403zM441 403V397h1V403zM446 403V397h1V403zM448 403V397h1V403zM458 391V384h1V391zM468 391V384h1V391zM474 403V397h1V403zM476 403V397h1V403zM479 397V384h1V397zM481 403V397h1V403zM488 403V397h1V403zM514 403V397h1V403zM525 403V391h1V403zM528 403V397h1V403zM533 403V397h1V403zM538 403V391h1V403zM540 403V372h1V403zM542 403V391h1V403zM544 397V391h1V397zM550 397V391h1V397zM553 403V397h1V403zM555 403V397h1V403zM563 397V391h1V397zM569 397V384h1V397zM574 403V397h1V403zM580 403V391h1V403zM582 403V384h1V403zM584 403V391h1V403z" fill="#4ec408" shape-rendering="crispEdges"/>
<path d="M242 410v-57h1v57zM281 410v-57h1v57zM301 410v-63h1v63zM368 410v-38h1v38zM406 410v-44h1v44zM413 410v-38h1v38zM424 410v-38h1v38zM441 410v-44h1v44zM462 410v-38h1v38zM481 410v-57h1v57zM500 410v-38h1v38zM501 410v-38h1v38zM539 410v-70h1v70z" fill="#74cc00" shape-rendering="crispEdges"/>
<rect x="190" y="410" width="402" height="1" fill="#e6b4e6"/>
<rect x="592" y="284" width="1" height="126" fill="#48c8f6"/>
<rect x="189" y="283" width="2" height="127" fill="#000"/>
<rect x="622" y="283" width="2" height="127" fill="#000"/>
<rect x="189" y="283" width="435" height="1" fill="#000"/>
<rect x="189" y="284" width="435" height="1" fill="#1c1c22"/>
<rect x="186" y="128" width="3" height="1" fill="#000"/>
<text transform="translate(186.3 132) scale(0.955 1)" text-anchor="end">600</text>
<rect x="186" y="149" width="3" height="1" fill="#000"/>
<text transform="translate(186.3 153) scale(0.955 1)" text-anchor="end">500</text>
<rect x="186" y="170" width="3" height="1" fill="#000"/>
<text transform="translate(186.3 174) scale(0.955 1)" text-anchor="end">400</text>
<rect x="186" y="191" width="3" height="1" fill="#000"/>
<text transform="translate(186.3 195) scale(0.955 1)" text-anchor="end">300</text>
<rect x="186" y="212" width="3" height="1" fill="#000"/>
<text transform="translate(186.3 216) scale(0.955 1)" text-anchor="end">200</text>
<rect x="186" y="233" width="3" height="1" fill="#000"/>
<text transform="translate(186.3 237) scale(0.955 1)" text-anchor="end">100</text>
<rect x="186" y="284" width="3" height="1" fill="#000"/>
<text transform="translate(186.3 288) scale(0.955 1)" text-anchor="end">20</text>
<rect x="186" y="316" width="3" height="1" fill="#000"/>
<text transform="translate(186.3 320) scale(0.955 1)" text-anchor="end">15</text>
<rect x="186" y="347" width="3" height="1" fill="#000"/>
<text transform="translate(186.3 351) scale(0.955 1)" text-anchor="end">10</text>
<rect x="186" y="378" width="3" height="1" fill="#000"/>
<text transform="translate(186.3 382) scale(0.955 1)" text-anchor="end">5</text>
<rect x="624" y="247" width="3" height="1" fill="#000"/>
<rect x="624" y="240" width="3" height="1" fill="#000"/>
<rect x="624" y="233" width="3" height="1" fill="#000"/>
<rect x="624" y="226" width="3" height="1" fill="#000"/>
<rect x="624" y="219" width="3" height="1" fill="#000"/>
<rect x="624" y="212" width="3" height="1" fill="#000"/>
<rect x="624" y="205" width="3" height="1" fill="#000"/>
<rect x="624" y="198" width="3" height="1" fill="#000"/>
<rect x="624" y="191" width="3" height="1" fill="#000"/>
<rect x="624" y="184" width="3" height="1" fill="#000"/>
<rect x="624" y="177" width="3" height="1" fill="#000"/>
<rect x="624" y="170" width="3" height="1" fill="#000"/>
<rect x="624" y="163" width="3" height="1" fill="#000"/>
<rect x="624" y="156" width="3" height="1" fill="#000"/>
<rect x="624" y="149" width="3" height="1" fill="#000"/>
<rect x="624" y="142" width="3" height="1" fill="#000"/>
<rect x="624" y="135" width="3" height="1" fill="#000"/>
<rect x="624" y="128" width="3" height="1" fill="#000"/>
<text transform="translate(627.3 244) scale(0.955 1)">2 X</text>
<text transform="translate(627.3 230) scale(0.955 1)">4 X</text>
<text transform="translate(627.3 216) scale(0.955 1)">6 X</text>
<text transform="translate(627.3 202) scale(0.955 1)">8 X</text>
<text transform="translate(627.3 188) scale(0.955 1)">10 X</text>
<text transform="translate(627.3 174) scale(0.955 1)">12 X</text>
<text transform="translate(627.3 160) scale(0.955 1)">14 X</text>
<text transform="translate(627.3 146) scale(0.955 1)">16 X</text>
<text transform="translate(627.3 132) scale(0.955 1)">18 X</text>
<text transform="translate(626.3 288.0) scale(0.955 1)">10%</text>
<text transform="translate(626.3 313.1) scale(0.955 1)">8%</text>
<text transform="translate(626.3 338.1) scale(0.955 1)">6%</text>
<text transform="translate(626.3 363.2) scale(0.955 1)">4%</text>
<text transform="translate(626.3 388.2) scale(0.955 1)">2%</text>
<text transform="translate(189.8 264) scale(0.955 1)" text-anchor="middle">0.0</text>
<text transform="translate(233.0 264) scale(0.955 1)" text-anchor="middle">5.0</text>
<text transform="translate(276.2 264) scale(0.955 1)" text-anchor="middle">10.0</text>
<text transform="translate(319.4 264) scale(0.955 1)" text-anchor="middle">15.0</text>
<text transform="translate(362.6 264) scale(0.955 1)" text-anchor="middle">20.0</text>
<text transform="translate(405.8 264) scale(0.955 1)" text-anchor="middle">25.0</text>
<text transform="translate(449.0 264) scale(0.955 1)" text-anchor="middle">30.0</text>
<text transform="translate(492.2 264) scale(0.955 1)" text-anchor="middle">35.0</text>
<text transform="translate(535.4 264) scale(0.955 1)" text-anchor="middle">40.0</text>
<text transform="translate(578.6 264) scale(0.955 1)" text-anchor="middle">45.0</text>
<text transform="translate(602 264) scale(0.955 1)">50.0 GB</text>
<text transform="translate(189.8 420) scale(0.955 1)" text-anchor="middle">0.0</text>
<text transform="translate(233.0 420) scale(0.955 1)" text-anchor="middle">5.0</text>
<text transform="translate(276.2 420) scale(0.955 1)" text-anchor="middle">10.0</text>
<text transform="translate(319.4 420) scale(0.955 1)" text-anchor="middle">15.0</text>
<text transform="translate(362.6 420) scale(0.955 1)" text-anchor="middle">20.0</text>
<text transform="translate(405.8 420) scale(0.955 1)" text-anchor="middle">25.0</text>
<text transform="translate(449.0 420) scale(0.955 1)" text-anchor="middle">30.0</text>
<text transform="translate(492.2 420) scale(0.955 1)" text-anchor="middle">35.0</text>
<text transform="translate(535.4 420) scale(0.955 1)" text-anchor="middle">40.0</text>
<text transform="translate(578.6 420) scale(0.955 1)" text-anchor="middle">45.0</text>
<text transform="translate(602 420) scale(0.955 1)">50.0 GB</text>
<rect x="191" y="117" width="6" height="8" fill="#008000"/><text transform="translate(200 125) scale(0.955 1)">LDC</text>
<rect x="223" y="117" width="6" height="8" fill="#8cd0ff"/><text transform="translate(232 125) scale(0.955 1)">Read speed</text>
<rect x="293" y="117" width="6" height="8" fill="#ff80f0"/><text transform="translate(302 125) scale(0.955 1)">Write speed</text>
<rect x="191" y="273" width="6" height="8" fill="#008000"/><text transform="translate(200 281) scale(0.955 1)">BIS</text>
<rect x="219" y="273" width="6" height="8" fill="#d8a0d8"/><text transform="translate(228 281) scale(0.955 1)">Jitter</text>
<rect x="254" y="270" width="6" height="3" fill="#000"/>
</svg>
<!-- stats -->
<div class="a" style="left:395px;top:430px;width:13px;height:13px;background:#fff;border:1px solid #333"></div>
<svg class="a" style="left:395px;top:430px" width="13" height="13" viewBox="0 0 13 13"><path d="M2.500 6.300l3 3.100 6.100-6.100" fill="none" stroke="#222" stroke-width="1.100"/></svg>
<div class="btn" style="left:575px;top:428px;width:75px;height:21px"></div>
<svg class="a" style="left:636.500px;top:436.500px" width="10" height="6"><use href="#dd"/></svg>
<div class="btn" style="left:576px;top:452px;width:73px;height:21px"></div>
<div class="btn" style="left:575px;top:479px;width:73px;height:21px"></div>
<!-- status bar -->
<div class="a" style="left:1px;top:505px;width:659px;height:18px;background:#f0f0f0"></div>
<div class="a" style="left:141px;top:507px;width:1px;height:15px;background:#d0d0d0"></div>
<div class="a" style="left:146px;top:508px;width:303px;height:13px;background:#e6e6e6;border:1px solid #bcbcbc"></div>
<div class="a" style="left:147px;top:509px;width:300px;height:11px;background:#06b025"></div>
<div class="a" style="left:507px;top:507px;width:1px;height:15px;background:#d0d0d0"></div><div class="a" style="left:630px;top:507px;width:1px;height:15px;background:#d0d0d0"></div>
<svg class="a" style="left:648px;top:511px" width="12" height="12" viewBox="0 0 12 12" fill="#bdbdbd"><rect x="8.500" y="2.500" width="1.500" height="1.500"/><rect x="8.500" y="5.500" width="1.500" height="1.500"/><rect x="8.500" y="8.500" width="1.500" height="1.500"/><rect x="5.500" y="5.500" width="1.500" height="1.500"/><rect x="5.500" y="8.500" width="1.500" height="1.500"/><rect x="2.500" y="8.500" width="1.500" height="1.500"/></svg>
<div class="t" style="left:30.7px;top:8px;font-size:12px;transform:scaleX(0.9779);color:#fff;">Opti Drive Control 1.70</div>
<div class="t" style="left:7.52px;top:33px;font-size:12px;transform:scaleX(0.9833);">File</div>
<div class="t" style="left:39.44px;top:33px;font-size:12px;transform:scaleX(0.9617);">Start test</div>
<div class="t" style="left:99.35px;top:33px;font-size:12px;transform:scaleX(0.9519);">Extra</div>
<div class="t" style="left:139.7px;top:33px;font-size:12px;transform:scaleX(0.9958);">Help</div>
<div class="t" style="left:9.1px;top:65px;font-size:12px;transform:scaleX(0.8966);font-weight:bold;">Drive</div>
<div class="t" style="left:83.62px;top:66px;font-size:12px;transform:scaleX(0.7824);">(L:)</div>
<div class="t" style="left:106.64px;top:66px;font-size:12px;transform:scaleX(0.8613);">HL-DT-ST BD-RE</div>
<div class="t" style="left:194.6px;top:66px;font-size:12px;transform:scaleX(0.8656);">WH16NS58 TST4</div>
<div class="t" style="left:373.6px;top:65px;font-size:12px;transform:scaleX(0.8583);font-weight:bold;">Speed</div>
<div class="t" style="left:422.0px;top:65px;font-size:12px;transform:scaleX(0.8643);">4.0 X</div>
<div class="t" style="left:9.15px;top:97px;font-size:12px;transform:scaleX(0.8458);font-weight:bold;">Disc</div>
<div class="t" style="left:9.3px;top:123px;font-size:12px;transform:scaleX(0.8538);">Type</div>
<div class="t" style="left:109.95px;top:123px;font-size:12px;transform:scaleX(0.8511);color:#1818ee;">BD-R DL</div>
<div class="t" style="left:8.34px;top:139px;font-size:12px;transform:scaleX(0.9619);">MID</div>
<div class="t" style="left:86.64px;top:139px;font-size:12px;transform:scaleX(0.856);color:#1818ee;">MEIRB1 (001)</div>
<div class="t" style="left:8.29px;top:156px;font-size:12px;transform:scaleX(1.0057);">Length</div>
<div class="t" style="left:107.5px;top:156px;font-size:12px;transform:scaleX(0.874);color:#1818ee;">46.61 GB</div>
<div class="t" style="left:9.3px;top:172px;font-size:12px;transform:scaleX(0.9625);">Contents</div>
<div class="t" style="left:128.8px;top:172px;font-size:12px;transform:scaleX(0.9167);color:#1818ee;">data</div>
<div class="t" style="left:8.38px;top:191px;font-size:12px;transform:scaleX(0.9179);">Label</div>
<div class="t" style="left:31.6px;top:222px;font-size:11px;transform:scaleX(0.9468);">Transfer rate</div>
<div class="t" style="left:30.4px;top:250px;font-size:11px;transform:scaleX(0.9579);">Create test disc</div>
<div class="t" style="left:31.0px;top:278px;font-size:11px;transform:scaleX(0.9465);">Verify test disc</div>
<div class="t" style="left:30.74px;top:306px;font-size:11px;transform:scaleX(0.9622);">Drive info</div>
<div class="t" style="left:30.75px;top:334px;font-size:11px;transform:scaleX(0.9463);">Disc info</div>
<div class="t" style="left:30.74px;top:362px;font-size:11px;transform:scaleX(0.96);color:#fff;">Disc quality</div>
<div class="t" style="left:30.5px;top:390px;font-size:11px;transform:scaleX(0.9605);">CD Bler</div>
<div class="t" style="left:30.67px;top:418px;font-size:11px;transform:scaleX(1.0278);">FE / TE</div>
<div class="t" style="left:30.77px;top:446px;font-size:11px;transform:scaleX(0.9314);">Extra tests</div>
<div class="t" style="left:30.5px;top:486px;font-size:11.5px;transform:scaleX(0.9541);letter-spacing:0.5px;">Status window &gt;&gt;</div>
<div class="t" style="left:3.8px;top:507px;font-size:11px;transform:scaleX(0.9753);">Test completed</div>
<div class="t" style="left:190.73px;top:95px;font-size:13.5px;transform:scaleX(1.0653);font-weight:bold;color:#fff;">Disc quality</div>
<div class="t" style="left:251.61px;top:428px;font-size:12px;transform:scaleX(0.8864);">LDC</div>
<div class="t" style="left:310.38px;top:428px;font-size:12px;transform:scaleX(0.8222);">BIS</div>
<div class="t" style="left:163.0px;top:445px;font-size:12px;transform:scaleX(0.91);">Avg</div>
<div class="t" style="left:162.02px;top:461px;font-size:12px;transform:scaleX(0.9773);">Max</div>
<div class="t" style="left:161.2px;top:477px;font-size:12px;transform:scaleX(0.972);">Total</div>
<div class="t" style="left:252.5px;top:445px;font-size:12px;transform:scaleX(0.8913);color:#1818ee;">3.26</div>
<div class="t" style="left:255.7px;top:461px;font-size:12px;transform:scaleX(0.865);color:#1818ee;">544</div>
<div class="t" style="left:230.5px;top:477px;font-size:12px;transform:scaleX(0.9022);color:#1818ee;">2490392</div>
<div class="t" style="left:305.5px;top:445px;font-size:12px;transform:scaleX(0.9217);color:#1818ee;">0.06</div>
<div class="t" style="left:316.18px;top:461px;font-size:12px;transform:scaleX(0.8182);color:#1818ee;">11</div>
<div class="t" style="left:297.0px;top:477px;font-size:12px;transform:scaleX(0.9);color:#1818ee;">46123</div>
<div class="t" style="left:417.5px;top:429px;font-size:12px;transform:scaleX(0.9308);">Jitter</div>
<div class="t" style="left:415.0px;top:445px;font-size:12px;transform:scaleX(0.8774);color:#1818ee;">-0.1%</div>
<div class="t" style="left:418.4px;top:461px;font-size:12px;transform:scaleX(0.8815);color:#1818ee;">0.0%</div>
<div class="t" style="left:460.55px;top:433px;font-size:12px;transform:scaleX(0.9485);">Speed</div>
<div class="t" style="left:460.5px;top:461px;font-size:12px;transform:scaleX(1.0024);">Position</div>
<div class="t" style="left:460.61px;top:477px;font-size:12px;transform:scaleX(0.8935);">Samples</div>
<div class="t" style="left:519.52px;top:433px;font-size:12px;transform:scaleX(0.8765);color:#1818ee;">1.75 X</div>
<div class="t" style="left:520.4px;top:461px;font-size:12px;transform:scaleX(0.913);color:#1818ee;">47731 MB</div>
<div class="t" style="left:520.4px;top:477px;font-size:12px;transform:scaleX(0.8775);color:#1818ee;">763517</div>
<div class="t" style="left:578.7px;top:431px;font-size:12px;transform:scaleX(0.8857);">4.0 X</div>
<div class="t" style="left:589.99px;top:455px;font-size:12px;transform:scaleX(1.0143);">Start full</div>
<div class="t" style="left:586.54px;top:482px;font-size:12px;transform:scaleX(0.9612);">Start part</div>
<div class="t" style="left:454.06px;top:506px;font-size:11px;transform:scaleX(0.9389);">100.0%</div>
<div class="t" style="left:601.6px;top:506px;font-size:11px;transform:scaleX(0.9714);">62:44</div>
</body></html>
